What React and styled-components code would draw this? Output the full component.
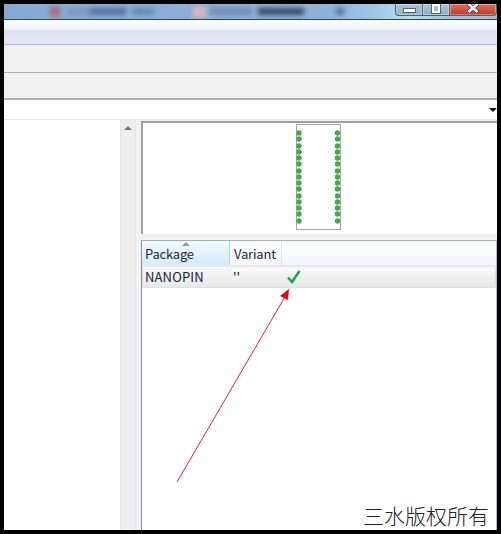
import React from "react";
import styled, { createGlobalStyle } from "styled-components";

const Global = createGlobalStyle`
  html, body { margin: 0; padding: 0; background: #000; }
  #root { width: 501px; height: 534px; }
`;

const Frame = styled.div`
  position: relative;
  width: 501px;
  height: 534px;
  box-sizing: border-box;
  padding: 4px;
  background: #000;
  overflow: hidden;
  font-family: "Noto Sans CJK SC", "Noto Sans", sans-serif;
`;

const Window = styled.div`
  width: 493px;
  height: 526px;
  display: flex;
  flex-direction: column;
  background: #f0f0f0;
`;

const TitleBar = styled.div`
  height: 15px;
  flex: none;
  display: flex;
  justify-content: flex-end;
  align-items: flex-start;
  overflow: hidden;
  background: linear-gradient(90deg, #86a9d2 0%, #8aaed6 30%, #8fb2d8 66%, #a2c8e6 76%, #b8def6 82%, #9fc4dc 90%, #9cc0d8 100%);
  border-bottom: 1px solid #34465c;
`;

const BlurStrip = styled.div`
  flex: 1;
  height: 15px;
  display: flex;
  align-items: center;
  padding-left: 46px;
  filter: blur(2.5px);
`;

const Blob = styled.span`
  flex: none;
  width: ${(p) => p.$w}px;
  height: ${(p) => p.$h || 7}px;
  margin-right: ${(p) => p.$gap || 0}px;
  background: ${(p) => p.$c};
`;

const Controls = styled.div`
  display: flex;
  height: 12px;
  flex: none;
`;

const Ctl = styled.div`
  width: ${(p) => p.$w}px;
  height: 12px;
  box-sizing: border-box;
  display: flex;
  align-items: flex-start;
  justify-content: center;
  border: 1px solid #4d5f72;
  border-top: none;
  border-left-width: ${(p) => (p.$first ? 1 : 0)}px;
  border-radius: 0 0 ${(p) => p.$r || 0}px ${(p) => p.$l || 0}px;
  box-shadow: inset 0 0 0 1px rgba(255, 255, 255, 0.35);
  background: ${(p) => p.$bg};
`;

const MinGlyph = styled.span`
  width: 11px;
  height: 3px;
  margin-top: 4px;
  background: #fff;
  border: 1px solid #56606c;
`;

const MaxGlyph = styled.span`
  width: 8px;
  height: 9px;
  box-sizing: border-box;
  border: 2px solid #fff;
  outline: 1px solid #56606c;
`;

const CloseSvg = styled.svg`
  display: block;
`;

const MenuBar = styled.div`
  height: 10px;
  flex: none;
  background: linear-gradient(#ffffff, #eef1f9);
`;

const Ribbon = styled.div`
  height: 14px;
  flex: none;
  background: linear-gradient(#dbe2f3, #e4e9f6);
  border-bottom: 1px solid #adb6cc;
`;

const Toolbar = styled.div`
  height: ${(p) => p.$h}px;
  flex: none;
  background: #f0f0f0;
  border-bottom: ${(p) => p.$line}px solid #b0b0b0;
`;

const ComboRow = styled.div`
  height: 19px;
  flex: none;
  background: #fff;
  display: flex;
  justify-content: flex-end;
  align-items: center;
  border-bottom: 1px solid #e6e6e6;
`;

const ComboArrow = styled.span`
  width: 0;
  height: 0;
  margin-top: 1px;
  border-left: 4px solid transparent;
  border-right: 4px solid transparent;
  border-top: 4px solid #111;
`;

const Body = styled.div`
  flex: 1;
  min-height: 0;
  display: flex;
`;

const LeftPane = styled.div`
  width: 116px;
  flex: none;
  background: #fff;
`;

const ScrollBar = styled.div`
  width: 16px;
  flex: none;
  display: flex;
  justify-content: center;
  padding-top: 6px;
  box-sizing: border-box;
  background: linear-gradient(90deg, #e6e6e6, #efefef 15%, #efefef 85%, #e6e6e6);
`;

const ScrollUp = styled.span`
  width: 0;
  height: 0;
  border-left: 4px solid transparent;
  border-right: 4px solid transparent;
  border-bottom: 4px solid #777;
`;

const Gutter = styled.div`
  width: 5px;
  flex: none;
  background: #f2f2f2;
`;

const RightPane = styled.div`
  flex: 1;
  min-width: 0;
  display: flex;
  flex-direction: column;
  padding-top: 1px;
`;

const Preview = styled.div`
  height: 111px;
  flex: none;
  background: #fff;
  border-top: 2px solid #a0a0a0;
  border-left: 2px solid #a0a0a0;
  display: flex;
  justify-content: center;
`;

const ChipSvg = styled.svg`
  display: block;
  margin: 1px 0 0 -3px;
`;

const Splitter = styled.div`
  height: 6px;
  flex: none;
  background: #f0f0f0;
`;

const Table = styled.div`
  flex: 1;
  min-height: 0;
  background: #fff;
  border-top: 1px solid #a4acb8;
  border-left: 1px solid #8f8f9c;
  border-right: 1px solid #b4bac4;
  display: flex;
  flex-direction: column;
`;

const HeaderRow = styled.div`
  height: 24px;
  flex: none;
  display: flex;
  border-bottom: 1px solid #e8e8e8;
  background: linear-gradient(#ffffff, #f3f5f8);
`;

const HeaderCell = styled.div`
  position: relative;
  width: ${(p) => p.$w}px;
  box-sizing: border-box;
  padding: 3px 0 0 ${(p) => p.$pad}px;
  font-size: 13px;
  letter-spacing: -0.2px;
  line-height: 20px;
  color: #1c2a3a;
  background: ${(p) => (p.$active ? "linear-gradient(#f3faff, #e3f3fd 45%, #d4ebfa)" : "transparent")};
  border-right: 1px solid ${(p) => (p.$active ? "#a9d8f5" : "#e2e4e8")};
`;

const SortMark = styled.span`
  position: absolute;
  left: 40px;
  top: 1px;
  width: 0;
  height: 0;
  border-left: 4px solid transparent;
  border-right: 4px solid transparent;
  border-bottom: 4px solid #7d9cc4;
`;

const DataRow = styled.div`
  height: 20px;
  flex: none;
  box-sizing: content-box;
  display: flex;
  border: 1px solid #dedede;
  border-top-color: #e8e8e8;
  border-radius: 2px;
  background: linear-gradient(#f8f8f8, #f0f0f0 50%, #e8e8e8);
`;

const DataCell = styled.div`
  width: ${(p) => p.$w}px;
  box-sizing: border-box;
  padding-left: ${(p) => p.$pad}px;
  font-size: 13px;
  line-height: 20px;
  letter-spacing: ${(p) => p.$track || 0}px;
  color: #14233a;
  display: flex;
  align-items: center;
`;

const CheckSvg = styled.svg`
  display: block;
`;

const ArrowSvg = styled.svg`
  position: absolute;
  left: 170px;
  top: 285px;
`;

const Watermark = styled.div`
  position: absolute;
  left: 363px;
  top: 502px;
  font-size: 21px;
  line-height: 27px;
  font-weight: 300;
  color: #222;
  white-space: nowrap;
`;

const pinYs = [133, 139, 146, 152, 158, 164, 171, 177, 183, 189, 196, 202, 208, 214, 221];

function Chip() {
  const ox = 296;
  const oy = 124;
  return (
    <ChipSvg width="46" height="107" viewBox="0 0 46 107">
      <rect x="0.5" y="0.5" width="44" height="105" fill="#fff" stroke="#a5a5a5" />
      {pinYs.map((y, i) =>
        i === 0 ? (
          <rect key={y} x={299 - ox - 2.5} y={y - oy - 2.5} width="5" height="5" fill="#4aa54e" />
        ) : (
          <circle key={y} cx={299 - ox} cy={y - oy} r="2.7" fill="#4aa54e" />
        )
      )}
      {pinYs.map((y) => (
        <circle key={"r" + y} cx={337.5 - ox} cy={y - oy} r="2.7" fill="#4aa54e" />
      ))}
    </ChipSvg>
  );
}

export default function App() {
  return (
    <Frame>
      <Global />
      <Window>
        <TitleBar>
          <BlurStrip>
            <Blob $w={10} $h={9} $c="#a86a78" $gap={8} />
            <Blob $w={22} $c="#7d97bb" />
            <Blob $w={36} $c="#55729c" $gap={6} />
            <Blob $w={22} $c="#6a88ae" $gap={38} />
            <Blob $w={14} $h={12} $c="#d8b4bc" $gap={4} />
            <Blob $w={42} $c="#6f8db0" $gap={6} />
            <Blob $w={46} $c="#344a6c" $gap={32} />
            <Blob $w={8} $c="#56708e" />
          </BlurStrip>
          <Controls>
            <Ctl $w={28} $first $l={4} $bg="linear-gradient(#a9c6d8, #8fb0c4)">
              <MinGlyph />
            </Ctl>
            <Ctl $w={27} $bg="linear-gradient(#a9c6d8, #8fb0c4)">
              <MaxGlyph />
            </Ctl>
            <Ctl $w={47} $r={4} $bg="linear-gradient(#e0705c, #c0392b)">
              <CloseSvg width="14" height="9" viewBox="0 0 14 9">
                <path d="M2 0 L12 8.5 M12 0 L2 8.5" stroke="#5a3a36" strokeWidth="4" />
                <path d="M2.5 0 L11.5 8 M11.5 0 L2.5 8" stroke="#fff" strokeWidth="2.6" />
              </CloseSvg>
            </Ctl>
          </Controls>
        </TitleBar>
        <MenuBar />
        <Ribbon />
        <Toolbar $h={27} $line={1} />
        <Toolbar $h={25} $line={2} />
        <ComboRow>
          <ComboArrow />
        </ComboRow>
        <Body>
          <LeftPane />
          <ScrollBar>
            <ScrollUp />
          </ScrollBar>
          <Gutter />
          <RightPane>
            <Preview>
              <Chip />
            </Preview>
            <Splitter />
            <Table>
              <HeaderRow>
                <HeaderCell $w={88} $pad={3} $active>
                  <SortMark />
                  Package
                </HeaderCell>
                <HeaderCell $w={52} $pad={4}>Variant</HeaderCell>
              </HeaderRow>
              <DataRow>
                <DataCell $w={87} $pad={2} $track={0.15}>NANOPIN</DataCell>
                <DataCell $w={54} $pad={3}>''</DataCell>
                <DataCell $w={30} $pad={3}>
                  <CheckSvg width="14" height="14" viewBox="0 0 14 14">
                    <path d="M1 7.5 L5 12 L12.5 1" fill="none" stroke="#17a34a" strokeWidth="2.4" />
                  </CheckSvg>
                </DataCell>
              </DataRow>
            </Table>
          </RightPane>
        </Body>
      </Window>
      <ArrowSvg width="125" height="200" viewBox="0 0 125 200">
        <line x1="7" y1="197" x2="116" y2="10" stroke="#e8202a" strokeWidth="1" />
        <path d="M119 4 L118 15 L110 11 Z" fill="#e8000f" />
      </ArrowSvg>
      <Watermark>三水版权所有</Watermark>
    </Frame>
  );
}
